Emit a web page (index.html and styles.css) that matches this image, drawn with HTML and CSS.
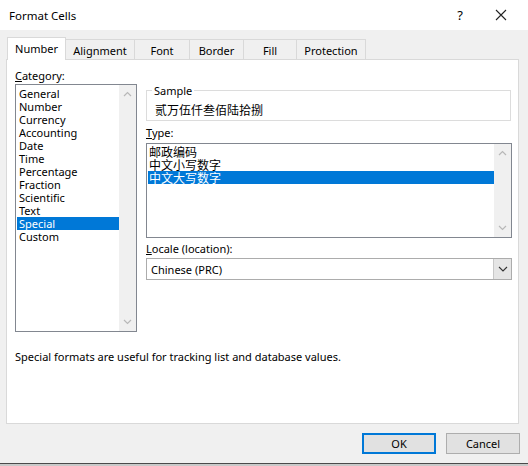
FILE: index.html
```html
<!DOCTYPE html>
<html>
<head>
<meta charset="utf-8">
<link rel="stylesheet" href="styles.css">
</head>
<body>
<div class="window">
  <div class="titlebar">
    <span class="title">Format Cells</span>
    <span class="help">?</span>
    <span class="close"><svg width="12" height="12" viewBox="0 0 12 12"><path d="M1 1L11 11M11 1L1 11" stroke="#222" stroke-width="1.1" fill="none"/></svg></span>
  </div>
  <div class="body">
    <div class="tabs">
      <div class="tab active">Number</div>
      <div class="tab w-align">Alignment</div>
      <div class="tab w-font">Font</div>
      <div class="tab w-border">Border</div>
      <div class="tab w-fill">Fill</div>
      <div class="tab w-prot">Protection</div>
    </div>
    <div class="panel">
      <div class="columns">
        <div class="leftcol">
          <div class="label"><u>C</u>ategory:</div>
          <div class="listbox cat">
            <div class="items">
              <div class="item">General</div>
              <div class="item">Number</div>
              <div class="item">Currency</div>
              <div class="item">Accounting</div>
              <div class="item">Date</div>
              <div class="item">Time</div>
              <div class="item">Percentage</div>
              <div class="item">Fraction</div>
              <div class="item">Scientific</div>
              <div class="item">Text</div>
              <div class="item sel">Special</div>
              <div class="item">Custom</div>
            </div>
            <div class="vscroll">
              <svg width="9" height="6" viewBox="0 0 9 6"><path d="M1 5L4.5 1.5L8 5" stroke="#b8b8b8" stroke-width="1.2" fill="none"/></svg>
              <svg width="9" height="6" viewBox="0 0 9 6"><path d="M1 1L4.5 4.5L8 1" stroke="#b8b8b8" stroke-width="1.2" fill="none"/></svg>
            </div>
          </div>
        </div>
        <div class="rightcol">
          <div class="sample">
            <div class="legend">Sample</div>
            <div class="sample-text">贰万伍仟叁佰陆拾捌</div>
          </div>
          <div class="label type-label"><u>T</u>ype:</div>
          <div class="listbox typelist">
            <div class="items">
              <div class="item cjk">邮政编码</div>
              <div class="item cjk">中文小写数字</div>
              <div class="item cjk sel">中文大写数字</div>
            </div>
            <div class="vscroll">
              <svg width="9" height="6" viewBox="0 0 9 6"><path d="M1 5L4.5 1.5L8 5" stroke="#b8b8b8" stroke-width="1.2" fill="none"/></svg>
              <svg width="9" height="6" viewBox="0 0 9 6"><path d="M1 1L4.5 4.5L8 1" stroke="#b8b8b8" stroke-width="1.2" fill="none"/></svg>
            </div>
          </div>
          <div class="label locale-label"><u>L</u>ocale (location):</div>
          <div class="combo">
            <span class="combo-text">Chinese (PRC)</span>
            <span class="combo-btn"><svg width="10" height="6" viewBox="0 0 10 6"><path d="M1 1L5 5L9 1" stroke="#333" stroke-width="1.1" fill="none"/></svg></span>
          </div>
        </div>
      </div>
      <div class="desc">Special formats are useful for tracking list and database values.</div>
    </div>
    <div class="buttons">
      <div class="btn default">OK</div>
      <div class="btn">Cancel</div>
    </div>
  </div>
</div>
</body>
</html>
```
FILE: styles.css
```css
html, body {
  margin: 0;
  padding: 0;
  background: #c9c9c9;
}
body {
  width: 528px;
  height: 466px;
  overflow: hidden;
  font-family: "Noto Sans", "Noto Sans CJK SC", sans-serif;
  font-size: 11px;
  color: #000;
}
.window {
  width: 528px;
  height: 463px;
  background: #f0f0f0;
  border-bottom: 1px solid #4a4a4a;
  display: flex;
  flex-direction: column;
}
.titlebar {
  height: 30px;
  background: #fff;
  display: flex;
  align-items: center;
  flex: none;
}
.title {
  margin-left: 9px;
  font-size: 11.5px;
  flex: 1;
}
.help {
  width: 20px;
  text-align: center;
  font-size: 13px;
  margin-right: 25px;
}
.close {
  width: 12px;
  height: 12px;
  margin-right: 21px;
  display: flex;
}
.body {
  flex: 1;
  display: flex;
  flex-direction: column;
}
.tabs {
  display: flex;
  align-items: flex-end;
  padding-left: 7px;
  margin-top: 7px;
  height: 22px;
  position: relative;
  z-index: 2;
}
.tab {
  height: 20px;
  box-sizing: border-box;
  border: 1px solid #d9d9d9;
  border-left: none;
  border-bottom: none;
  background: #f0f0f0;
  display: flex;
  align-items: center;
  justify-content: center;
  font-size: 11px;
  padding-top: 1px;
}
.tab.active {
  height: 23px;
  margin-bottom: -1px;
  width: 59px;
  background: #fff;
  border-left: 1px solid #d9d9d9;
  padding-top: 0;
  padding-bottom: 1px;
}
.w-align { width: 69px; }
.w-font { width: 55px; }
.w-border { width: 54px; }
.w-fill { width: 53px; }
.w-prot { width: 69px; }
.panel {
  margin-left: 6px;
  width: 513px;
  height: 365px;
  box-sizing: border-box;
  background: #fff;
  border: 1px solid #d9d9d9;
  padding: 8px 0 0 8px;
  display: flex;
  flex-direction: column;
}
.columns {
  display: flex;
  gap: 9px;
}
.leftcol {
  width: 122px;
  display: flex;
  flex-direction: column;
}
.label {
  height: 16px;
  line-height: 16px;
}
.listbox {
  border: 1px solid #828790;
  display: flex;
  background: #fff;
  box-sizing: border-box;
}
.cat {
  height: 248px;
}
.items {
  flex: 1;
  padding: 2px 0 0 1px;
}
.item {
  height: 13px;
  line-height: 13px;
  padding-left: 2px;
  white-space: nowrap;
}
.item.sel {
  background: #0078d7;
  color: #fff;
}
.vscroll {
  width: 17px;
  background: #f0f0f0;
  display: flex;
  flex-direction: column;
  justify-content: space-between;
  align-items: center;
  padding: 6px 0 6px;
}
.rightcol {
  width: 366px;
  padding-top: 22px;
  display: flex;
  flex-direction: column;
}
.sample {
  border: 1px solid #dcdcdc;
  height: 31px;
  box-sizing: border-box;
  width: 365px;
  padding-left: 8px;
}
.legend {
  width: max-content;
  background: #fff;
  margin-top: -7px;
  margin-left: -3px;
  padding: 0 2px;
  line-height: 14px;
  height: 14px;
}
.sample-text {
  font-family: "Noto Sans CJK SC", sans-serif;
  font-size: 12px;
  line-height: 16px;
  margin-top: 4px;
}
.type-label {
  margin-top: 5px;
  height: 17px;
  line-height: 14px;
}
.typelist {
  height: 95px;
}
.typelist .items {
  padding: 1px 0 0 1px;
}
.cjk {
  font-family: "Noto Sans CJK SC", sans-serif;
  font-size: 12px;
  padding-left: 1px;
}
.locale-label {
  margin-top: 3px;
  height: 17px;
  line-height: 16px;
}
.combo {
  height: 22px;
  box-sizing: border-box;
  border: 1px solid #acacac;
  display: flex;
  align-items: center;
  background: #fff;
}
.combo-text {
  flex: 1;
  padding-left: 4px;
}
.combo-btn {
  width: 17px;
  height: 20px;
  background: #e5e5e5;
  border-left: 1px solid #c8c8c8;
  display: flex;
  align-items: center;
  justify-content: center;
}
.desc {
  margin-top: 17px;
  line-height: 16px;
}
.buttons {
  display: flex;
  justify-content: flex-end;
  gap: 10px;
  margin-top: 9px;
  padding-right: 8px;
}
.btn {
  width: 74px;
  height: 21px;
  box-sizing: border-box;
  border: 1px solid #adadad;
  background: #e1e1e1;
  display: flex;
  align-items: center;
  justify-content: center;
}
.btn.default {
  border: 2px solid #0078d7;
}
```
